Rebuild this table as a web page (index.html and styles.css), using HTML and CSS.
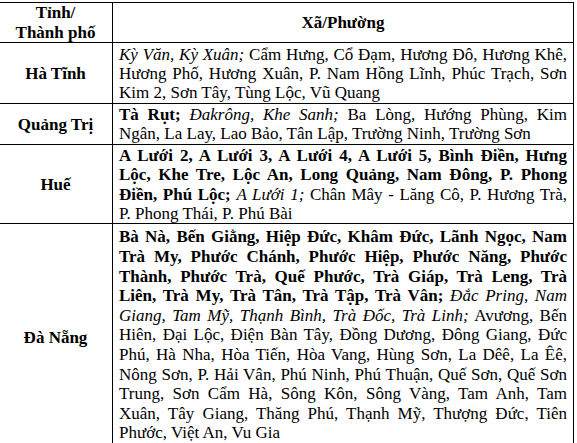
FILE: index.html
```html
<!DOCTYPE html>
<html lang="vi">
<head>
<meta charset="utf-8">
<title>Danh sách xã/phường</title>
<link rel="stylesheet" href="styles.css">
</head>
<body>
<table class="list">
<colgroup><col class="col-prov"><col class="col-ward"></colgroup>
<thead>
<tr><th class="prov">Tỉnh/<br>Thành phố</th><th class="ward-head">Xã/Phường</th></tr>
</thead>
<tbody>
<tr>
<th class="prov">Hà Tĩnh</th>
<td class="wards">
<span class="ln"><i>Kỳ Văn, Kỳ Xuân;</i> Cẩm Hưng, Cổ Đạm, Hương Đô, Hương Khê,</span>
<span class="ln">Hương Phố, Hương Xuân, P. Nam Hồng Lĩnh, Phúc Trạch, Sơn</span>
<span class="ln last">Kim 2, Sơn Tây, Tùng Lộc, Vũ Quang</span>
</td>
</tr>
<tr>
<th class="prov">Quảng Trị</th>
<td class="wards">
<span class="ln"><b>Tà Rụt;</b> <i>Đakrông, Khe Sanh;</i> Ba Lòng, Hướng Phùng, Kim</span>
<span class="ln last">Ngân, La Lay, Lao Bảo, Tân Lập, Trường Ninh, Trường Sơn</span>
</td>
</tr>
<tr>
<th class="prov">Huế</th>
<td class="wards">
<span class="ln"><b>A Lưới 2, A Lưới 3, A Lưới 4, A Lưới 5, Bình Điền, Hưng</b></span>
<span class="ln"><b>Lộc, Khe Tre, Lộc An, Long Quảng, Nam Đông, P. Phong</b></span>
<span class="ln"><b>Điền, Phú Lộc;</b> <i>A Lưới 1;</i> Chân Mây - Lăng Cô, P. Hương Trà,</span>
<span class="ln last">P. Phong Thái, P. Phú Bài</span>
</td>
</tr>
<tr>
<th class="prov">Đà Nẵng</th>
<td class="wards tall">
<span class="ln"><b>Bà Nà, Bến Giằng, Hiệp Đức, Khâm Đức, Lãnh Ngọc, Nam</b></span>
<span class="ln"><b>Trà My, Phước Chánh, Phước Hiệp, Phước Năng, Phước</b></span>
<span class="ln"><b>Thành, Phước Trà, Quế Phước, Trà Giáp, Trà Leng, Trà</b></span>
<span class="ln"><b>Liên, Trà My, Trà Tân, Trà Tập, Trà Vân;</b> <i>Đắc Pring, Nam</i></span>
<span class="ln"><i>Giang, Tam Mỹ, Thạnh Bình, Trà Đốc, Trà Linh;</i> Avương, Bến</span>
<span class="ln">Hiên, Đại Lộc, Điện Bàn Tây, Đồng Dương, Đông Giang, Đức</span>
<span class="ln">Phú, Hà Nha, Hòa Tiến, Hòa Vang, Hùng Sơn, La Dêê, La Êê,</span>
<span class="ln">Nông Sơn, P. Hải Vân, Phú Ninh, Phú Thuận, Quế Sơn, Quế Sơn</span>
<span class="ln">Trung, Sơn Cẩm Hà, Sông Kôn, Sông Vàng, Tam Anh, Tam</span>
<span class="ln">Xuân, Tây Giang, Thăng Phú, Thạnh Mỹ, Thượng Đức, Tiên</span>
<span class="ln last">Phước, Việt An, Vu Gia</span>
</td>
</tr>
</tbody>
</table>
</body>
</html>
```

FILE: styles.css
```css
html, body {
  margin: 0;
  padding: 0;
  background: #ffffff;
  overflow: hidden;
}

body {
  font-family: "Liberation Serif", "Times New Roman", serif;
  font-size: 17px;
  line-height: 19.6px;
  color: #000000;
}

.list {
  border-collapse: collapse;
  table-layout: fixed;
  width: 576px;
  margin: 2px 0 0 -2px;
}

.col-prov {
  width: 114px;
}

.list th,
.list td {
  border: 1px solid #000000;
  padding: 0 6px;
  vertical-align: middle;
}

.list tbody th,
.list tbody td {
  padding-top: 1.5px;
  line-height: 19.3px;
}

.prov {
  font-weight: bold;
  text-align: center;
}

.list .prov {
  padding-left: 2px;
  padding-right: 2px;
}

.ward-head {
  font-weight: bold;
  text-align: center;
}

.wards {
  text-align: justify;
}

.list tbody .tall {
  padding-top: 3px;
  padding-bottom: 6px;
  line-height: 19.6px;
}

.ln {
  display: block;
  text-align: justify;
  text-align-last: justify;
}

.ln.last {
  text-align-last: left;
}
```
